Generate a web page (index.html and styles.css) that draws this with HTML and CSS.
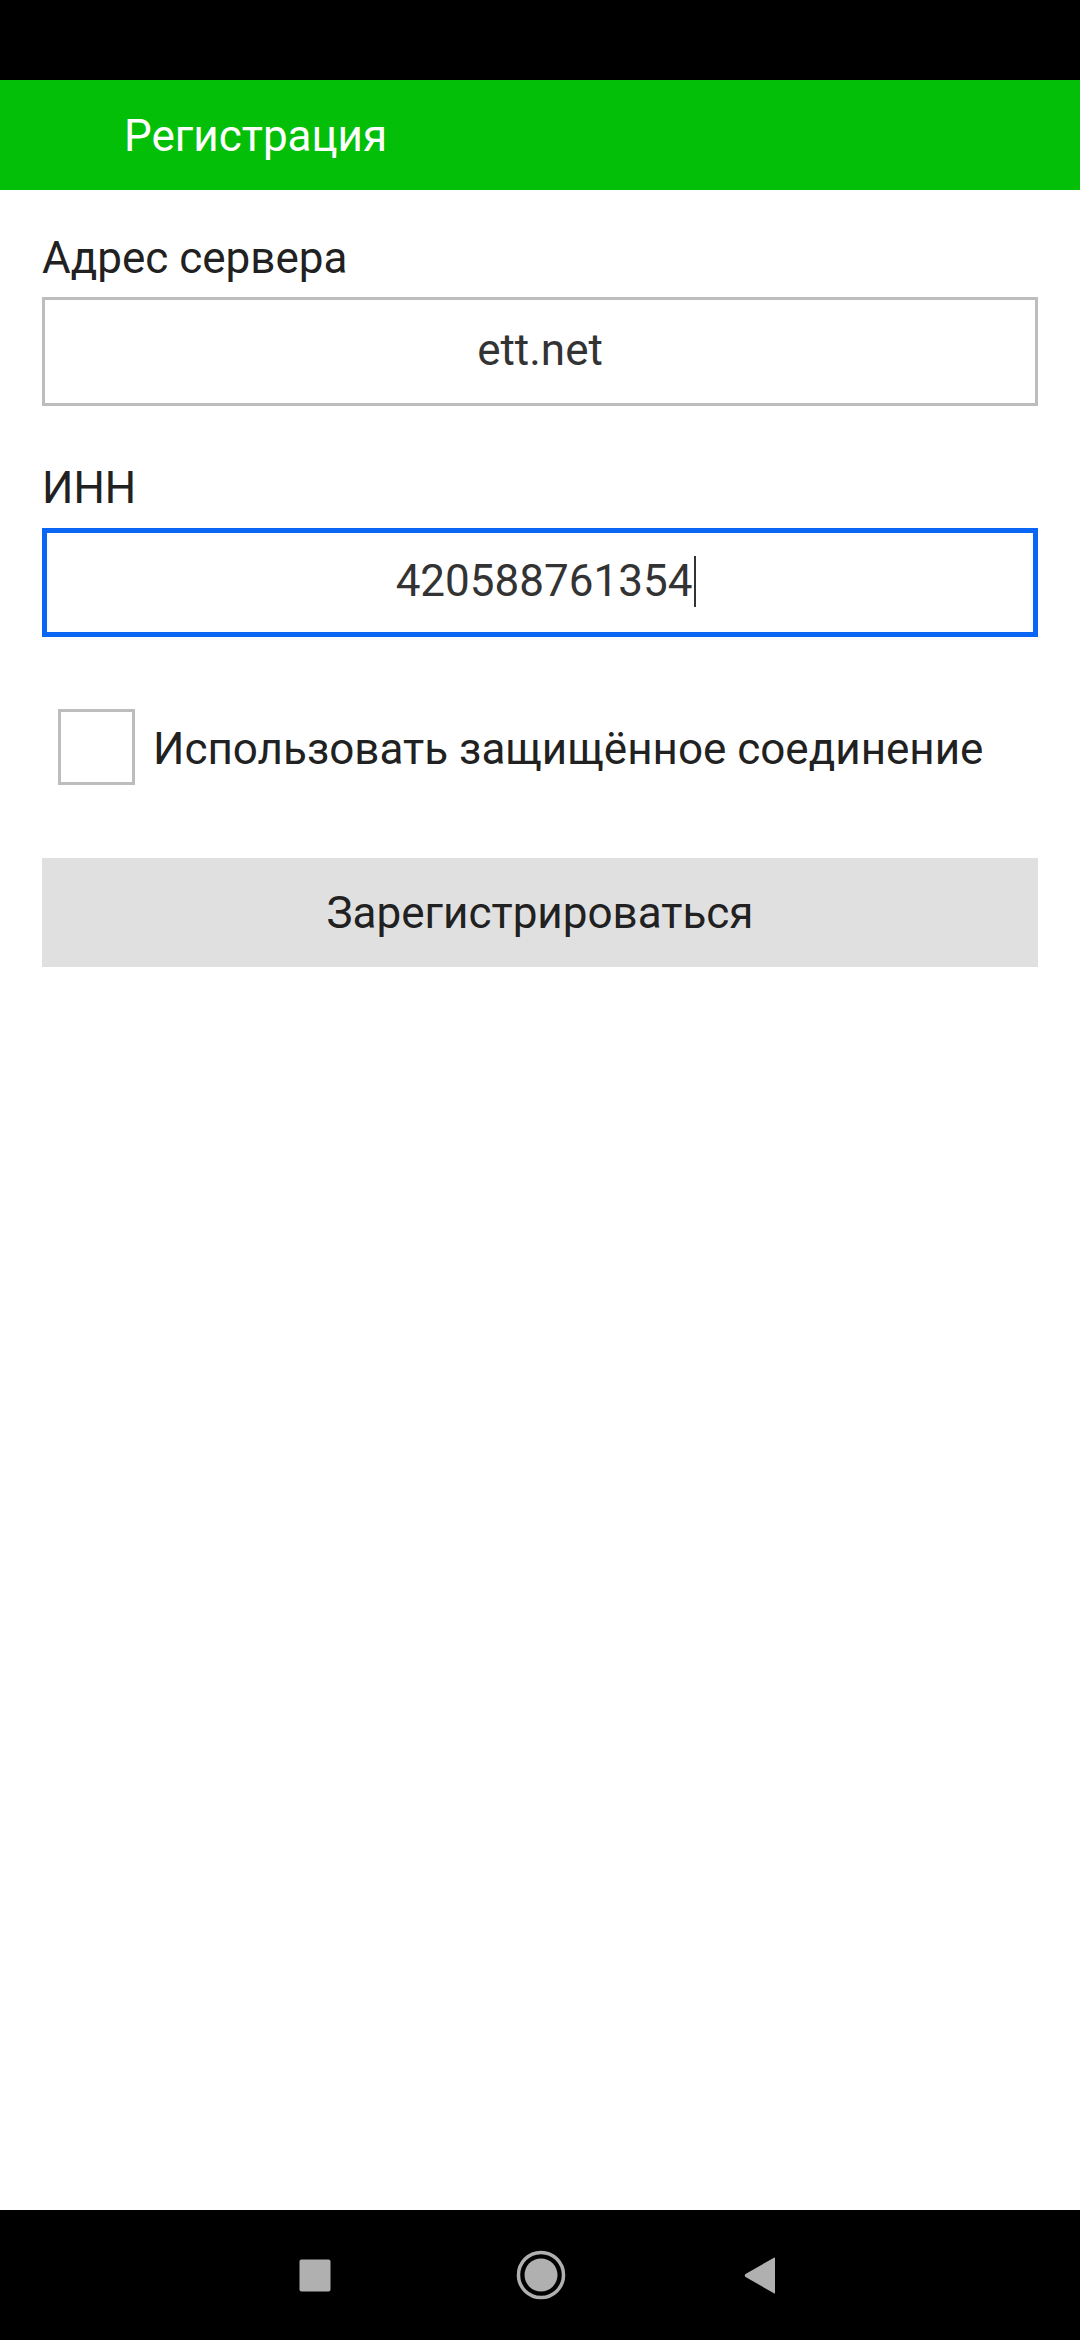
FILE: index.html
```html
<!DOCTYPE html>
<html>
<head>
    <title>Регистрация</title>
    <link rel="stylesheet" href="styles.css">
</head>
<body>

    <div class="status-bar"></div>

    <header class="app-bar">
        <h1>Регистрация</h1>
    </header>

    <main class="form">
        <label class="label">Адрес сервера</label>
        <div class="field">ett.net</div>

        <label class="label label-gap">ИНН</label>
        <div class="field field-focus">420588761354<span class="caret"></span></div>

        <div class="check-row">
            <span class="checkbox"></span>
            <span class="check-text">Использовать защищённое соединение</span>
        </div>

        <button class="btn">Зарегистрироваться</button>
    </main>

    <nav class="nav-bar">
        <svg width="32" height="33" viewBox="0 0 32 33">
            <rect x="0.5" y="0.5" width="31" height="32" rx="2" fill="#b0b0b0"/>
        </svg>
        <svg width="50" height="50" viewBox="0 0 50 50">
            <circle cx="25" cy="25" r="22.5" fill="none" stroke="#b0b0b0" stroke-width="3.5"/>
            <circle cx="25" cy="25" r="16.5" fill="#b0b0b0"/>
        </svg>
        <svg width="32" height="37" viewBox="0 0 32 37">
            <path d="M31 1 L31 36 Q30.5 37 29.5 36 L1.5 20 Q0 18.5 1.5 17 L29.5 1 Q30.5 0 31 1 Z" fill="#b0b0b0"/>
        </svg>
    </nav>

</body>
</html>
```

FILE: styles.css
```css
body {
    margin: 0;
    height: 2340px;
    display: flex;
    flex-direction: column;
    font-family: Roboto, "Noto Sans", Arial, sans-serif;
    background: #ffffff;
    color: #212121;
}

.status-bar {
    height: 80px;
    background: #000000;
}

.app-bar {
    height: 110px;
    background: #03bf08;
    display: flex;
    align-items: center;
    padding-left: 124px;
}

.app-bar h1 {
    margin: 0;
    font-size: 44px;
    font-weight: normal;
    line-height: 52px;
    color: #ffffff;
    padding-top: 2px;
}

.form {
    flex: 1;
    display: flex;
    flex-direction: column;
    padding: 42px 42px 0;
}

.label {
    font-size: 44px;
    line-height: 52px;
    margin-bottom: 13px;
}

.label-gap {
    margin-top: 56px;
    margin-bottom: 14px;
}

.field {
    box-sizing: border-box;
    height: 109px;
    border: 3px solid #bdbdbd;
    display: flex;
    align-items: center;
    justify-content: center;
    font-size: 44px;
    color: #333333;
    padding-bottom: 4px;
}

.field-focus {
    border: 5px solid #0a66f5;
}

.caret {
    display: inline-block;
    width: 2px;
    height: 51px;
    background: #333333;
    margin-left: 2px;
    margin-right: -12px;
    margin-top: 2px;
}

.check-row {
    display: flex;
    align-items: center;
    margin-top: 72px;
    padding-left: 16px;
}

.checkbox {
    box-sizing: border-box;
    width: 77px;
    height: 76px;
    border: 3px solid #bdbdbd;
    flex-shrink: 0;
}

.check-text {
    font-size: 44px;
    line-height: 52px;
    margin-left: 18px;
    padding-top: 4px;
}

.btn {
    margin-top: 73px;
    height: 109px;
    border: none;
    background: #e0e0e0;
    font-family: inherit;
    font-size: 44px;
    color: #212121;
    padding: 0;
}

.nav-bar {
    height: 130px;
    background: #000000;
    display: flex;
    align-items: center;
    padding-left: 299px;
}

.nav-bar svg:nth-child(2) {
    margin-left: 185px;
}

.nav-bar svg:nth-child(3) {
    margin-left: 178px;
}
```
